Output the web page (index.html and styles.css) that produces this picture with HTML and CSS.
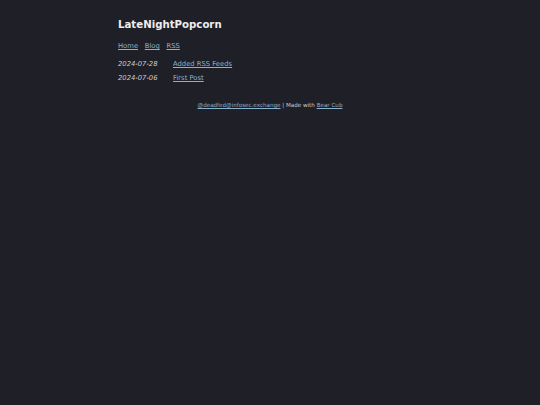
FILE: index.html
```html
<!DOCTYPE html>
<html>
<head>
<meta charset="utf-8">
<link rel="stylesheet" href="styles.css">
</head>
<body>
<header>
<a class="title" href="#"><h2>LateNightPopcorn</h2></a>
<nav><a href="#">Home</a> <a href="#">Blog</a> <a href="#">RSS</a></nav>
</header>
<main>
<ul class="posts">
<li><span class="date">2024-07-28</span><a href="#">Added RSS Feeds</a></li>
<li><span class="date">2024-07-06</span><a href="#">First Post</a></li>
</ul>
</main>
<footer><a href="#">@deadfed@infosec.exchange</a> | Made with <a href="#">Bear Cub</a></footer>
</body>
</html>
```
FILE: styles.css
```css
html { background: #1f1f28; }
body {
  margin: 0 auto;
  padding: 15px 8px;
  width: 304px;
  font-family: "DejaVu Sans", Verdana, sans-serif;
  font-size: 6.8px;
  line-height: 10px;
  color: #dddddd;
  background: #1f1f28;
}
a { color: #8ab2cc; }
.title { text-decoration: none; }
.title h2 { margin: 0; font-size: 10.2px; color: #eeeeee; line-height: 20px; }
nav { margin-top: 6px; }
nav a { margin-right: 4.5px; }
.posts { list-style: none; padding: 0; margin: 8px 0 0; }
.posts li { display: flex; margin-bottom: 4px; }
.date { width: 55px; font-style: italic; color: #cccccc; }
footer { margin-top: 17px; text-align: center; font-size: 5.6px; color: #cccccc; }
```
